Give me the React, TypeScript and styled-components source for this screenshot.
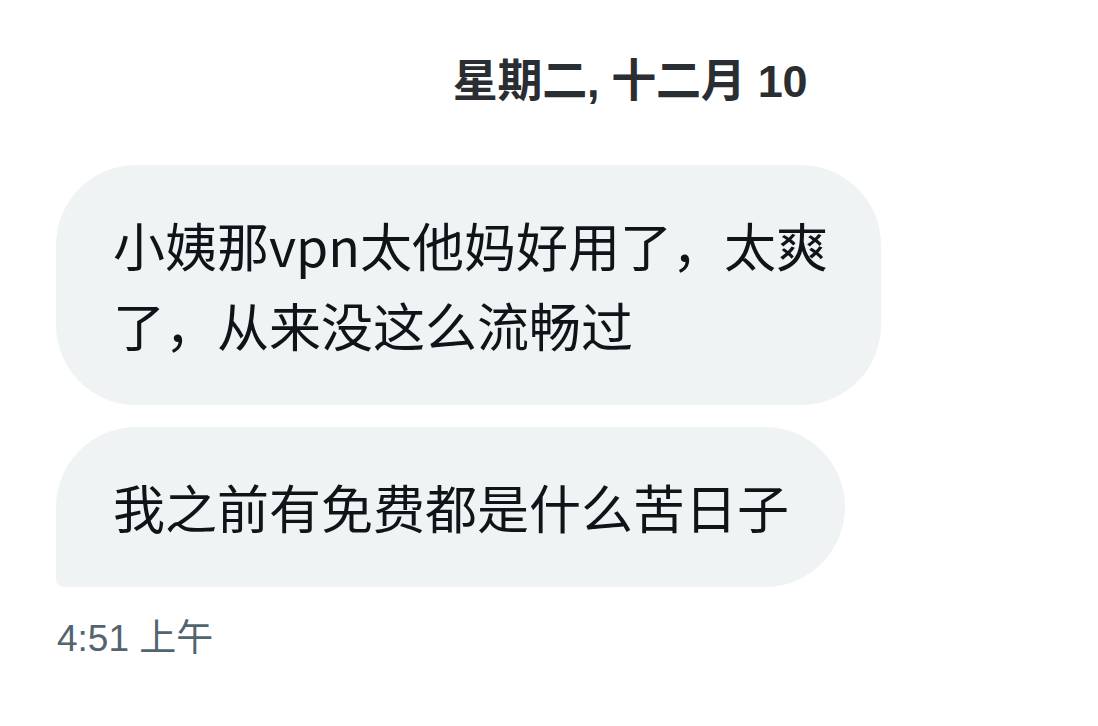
import * as React from "react"
import styled, { createGlobalStyle } from "styled-components"

const GlobalStyle = createGlobalStyle`
    html, body {
        margin: 0;
        padding: 0;
        background: #ffffff;
    }
    body {
        font-family: "Liberation Sans", "Noto Sans CJK SC", sans-serif;
        -webkit-font-smoothing: antialiased;
    }
`

const Conversation = styled.div`
    display: flex;
    flex-flow: column nowrap;
    align-items: flex-start;
    width: 1098px;
    min-height: 726px;
    box-sizing: border-box;
    padding: 56px 0 0 56px;
`

const DateHeader = styled.div`
    align-self: stretch;
    display: flex;
    justify-content: center;
    padding-left: 106px;
    margin-bottom: 57px;
    font-size: 45px;
    line-height: 52px;
    font-weight: 700;
    color: #2a2d31;
    letter-spacing: -0.3px;
`

// last bubble of a group gets the squared-off tail corner
const Bubble = styled.div<{ $last?: boolean }>`
    max-width: 718px;
    padding: 40px ${({ $last }) => ($last ? "56px" : "50px")} 40px 57px;
    margin-bottom: ${({ $last }) => ($last ? "0" : "22px")};
    background: #eff3f4;
    border-radius: ${({ $last }) => ($last ? "80px 80px 80px 8px" : "80px")};
    font-family: "Noto Sans CJK SC", "Noto Sans", sans-serif;
    font-size: 52px;
    line-height: 80px;
    color: #0f1419;
`

const Timestamp = styled.div`
    margin-top: 30px;
    padding-left: 1px;
    font-size: 37px;
    line-height: 44px;
    color: #536471;
`

export default function App() {
    return (
        <>
            <GlobalStyle />
            <Conversation>
                <DateHeader>星期二, 十二月 10</DateHeader>
                <Bubble>小姨那vpn太他妈好用了，太爽了，从来没这么流畅过</Bubble>
                <Bubble $last>我之前有免费都是什么苦日子</Bubble>
                <Timestamp>4:51 上午</Timestamp>
            </Conversation>
        </>
    )
}
